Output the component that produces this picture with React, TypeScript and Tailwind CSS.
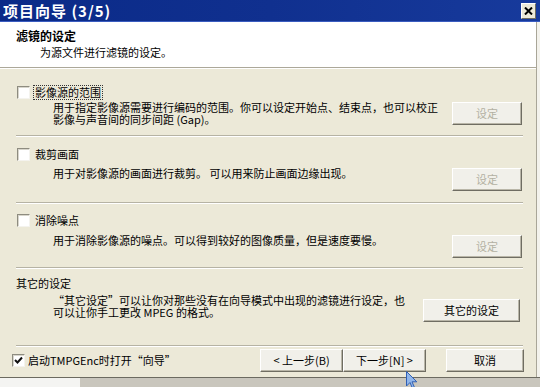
import React from 'react';

const font = "font-['Noto_Sans_CJK_SC',sans-serif]";

function CheckBox({ checked = false }: { checked?: boolean }) {
  return (
    <span className="relative w-[13px] h-[13px] shrink-0 bg-white border border-t-[#8e8c80] border-l-[#8e8c80] border-r-[#f4f3ee] border-b-[#f4f3ee] shadow-[inset_1px_1px_0_#d8d6cc]">
      {checked && (
        <svg className="absolute left-[1px] top-[1px]" width="9" height="9" viewBox="0 0 9 9">
          <path d="M1 4 L3.5 6.5 L8 1.5" fill="none" stroke="#111" strokeWidth="2" />
        </svg>
      )}
    </span>
  );
}

function XpButton({
  label,
  disabled = false,
  className = '',
}: {
  label: string;
  disabled?: boolean;
  className?: string;
}) {
  const text = disabled ? 'text-[#b3b0a2]' : 'text-black';
  return (
    <div
      className={`h-[23px] shrink-0 flex items-center justify-center text-[11px] bg-[#f1f0ea] border border-t-white border-l-white border-r-[#6f6d62] border-b-[#6f6d62] shadow-[inset_-1px_-1px_0_#b9b6a8] ${text} ${className}`}
    >
      {label}
    </div>
  );
}

function Separator() {
  return <div className="ml-4 w-[507px] h-[2px] border-t border-t-[#b6b3a4] border-b border-b-white" />;
}

function FilterSection({
  title,
  lines,
  focused = false,
  top,
  gap,
  bottom,
}: {
  title: string;
  lines: string[];
  focused?: boolean;
  top: string;
  gap: string;
  bottom: string;
}) {
  return (
    <div className={`pl-[17px] pr-[14px] ${top} ${bottom}`}>
      <div className="flex items-center h-[13px]">
        <CheckBox />
        <span
          className={`ml-[3px] px-[1px] text-[11px] leading-[13px] ${
            focused ? 'border border-dotted border-[#333]' : 'border border-transparent'
          }`}
        >
          {title}
        </span>
      </div>
      <div className={`flex items-start ${gap}`}>
        <div className="pl-[36px] flex-1 text-[11px] leading-[12px] whitespace-nowrap">
          {lines.map((l) => (
            <div key={l}>{l}</div>
          ))}
        </div>
        <XpButton label="设定" disabled className="w-[70px] mt-[1px]" />
      </div>
    </div>
  );
}

export default function App() {
  return (
    <div className={`relative w-[540px] h-[387px] overflow-hidden bg-[#d6d3cb] ${font} text-black`}>
      {/* title bar */}
      <div className="h-[22px] flex items-center justify-between bg-gradient-to-r from-[#0a2a88] via-[#10308f] to-[#173a9c] border-b border-b-[#3a5cc0]">
        <span className="pl-[3px] text-white font-bold text-[15px] leading-[22px] tracking-[1px]">项目向导 (3/5)</span>
        <div className="mr-[4px] w-[15px] h-[16px] flex items-center justify-center bg-[#ece9d8] border border-t-white border-l-white border-r-[#6f6d62] border-b-[#6f6d62]">
          <svg width="9" height="8" viewBox="0 0 9 8">
            <path d="M1 0.5 L8 7.5 M8 0.5 L1 7.5" stroke="#000" strokeWidth="2" />
          </svg>
        </div>
      </div>

      <div className="flex w-[540px]">
        <div className="w-[537px] border-r border-r-[#a9a698]">
          {/* header */}
          <div className="h-[45px] bg-white">
            <div className="pl-4 pt-[7px] text-[12px] leading-[13px] font-bold">滤镜的设定</div>
            <div className="pl-[40px] pt-[4px] text-[11px] leading-[13px]">为源文件进行滤镜的设定。</div>
          </div>
          <div className="h-[2px] border-t border-t-[#aca899] border-b border-b-white" />

          {/* body */}
          <div className="bg-[#ece9d8] h-[308px]">
            <FilterSection
              title="影像源的范围"
              focused
              top="pt-[17px]"
              gap="mt-[2px]"
              bottom="pb-[10px]"
              lines={[
                '用于指定影像源需要进行编码的范围。你可以设定开始点、结束点，也可以校正',
                '影像与声音间的同步间距 (Gap)。',
              ]}
            />
            <Separator />
            <FilterSection
              title="裁剪画面"
              top="pt-[11px]"
              gap="mt-[6px]"
              bottom="pb-[11px]"
              lines={['用于对影像源的画面进行裁剪。 可以用来防止画面边缘出现。']}
            />
            <Separator />
            <FilterSection
              title="消除噪点"
              top="pt-[10px]"
              gap="mt-[7px]"
              bottom="pb-[9px]"
              lines={['用于消除影像源的噪点。可以得到较好的图像质量，但是速度要慢。']}
            />
            <Separator />

            <div className="pl-4 pr-[16px] pt-[8px] pb-[23px]">
              <div className="text-[11px] leading-[13px]">其它的设定</div>
              <div className="flex items-start mt-[4px]">
                <div className="pl-[37px] flex-1 text-[11px] leading-[12px] whitespace-nowrap">
                  <div>“其它设定”可以让你对那些没有在向导模式中出现的滤镜进行设定，也</div>
                  <div>可以让你手工更改 MPEG 的格式。</div>
                </div>
                <XpButton label="其它的设定" className="w-[97px] mt-[5px]" />
              </div>
            </div>
            <Separator />

            <div className="flex items-center pl-[12px] pr-[12px] mt-[2px]">
              <CheckBox checked />
              <span className="ml-[3px] text-[11px]">启动TMPGEnc时打开“向导”</span>
              <div className="ml-auto flex">
                <XpButton label="< 上一步(B)" className="w-[83px]" />
                <XpButton label="下一步[N] >" className="w-[83px]" />
                <XpButton label="取消" className="w-[78px] ml-[20px]" />
              </div>
            </div>
          </div>
        </div>
        <div className="flex-1 bg-[#f3f2ec]" />
      </div>

      {/* below-window strip */}
      <div className="border-t border-t-[#6c6a60] h-[10px] flex">
        <div className="w-[80px] bg-[#f4f4f2]" />
        <div className="flex-1 bg-[#c9c6bd]" />
      </div>

      {/* mouse cursor */}
      <svg className="absolute left-[406px] top-[371px]" width="12" height="19" viewBox="0 0 12 19">
        <path d="M0.5 0.5 L0.5 15 L4 11.5 L6.5 17.5 L8.5 16.5 L6 10.8 L10.8 10.8 Z" fill="#8fb5ea" stroke="#2f5fb4" strokeWidth="1" />
      </svg>
    </div>
  );
}
